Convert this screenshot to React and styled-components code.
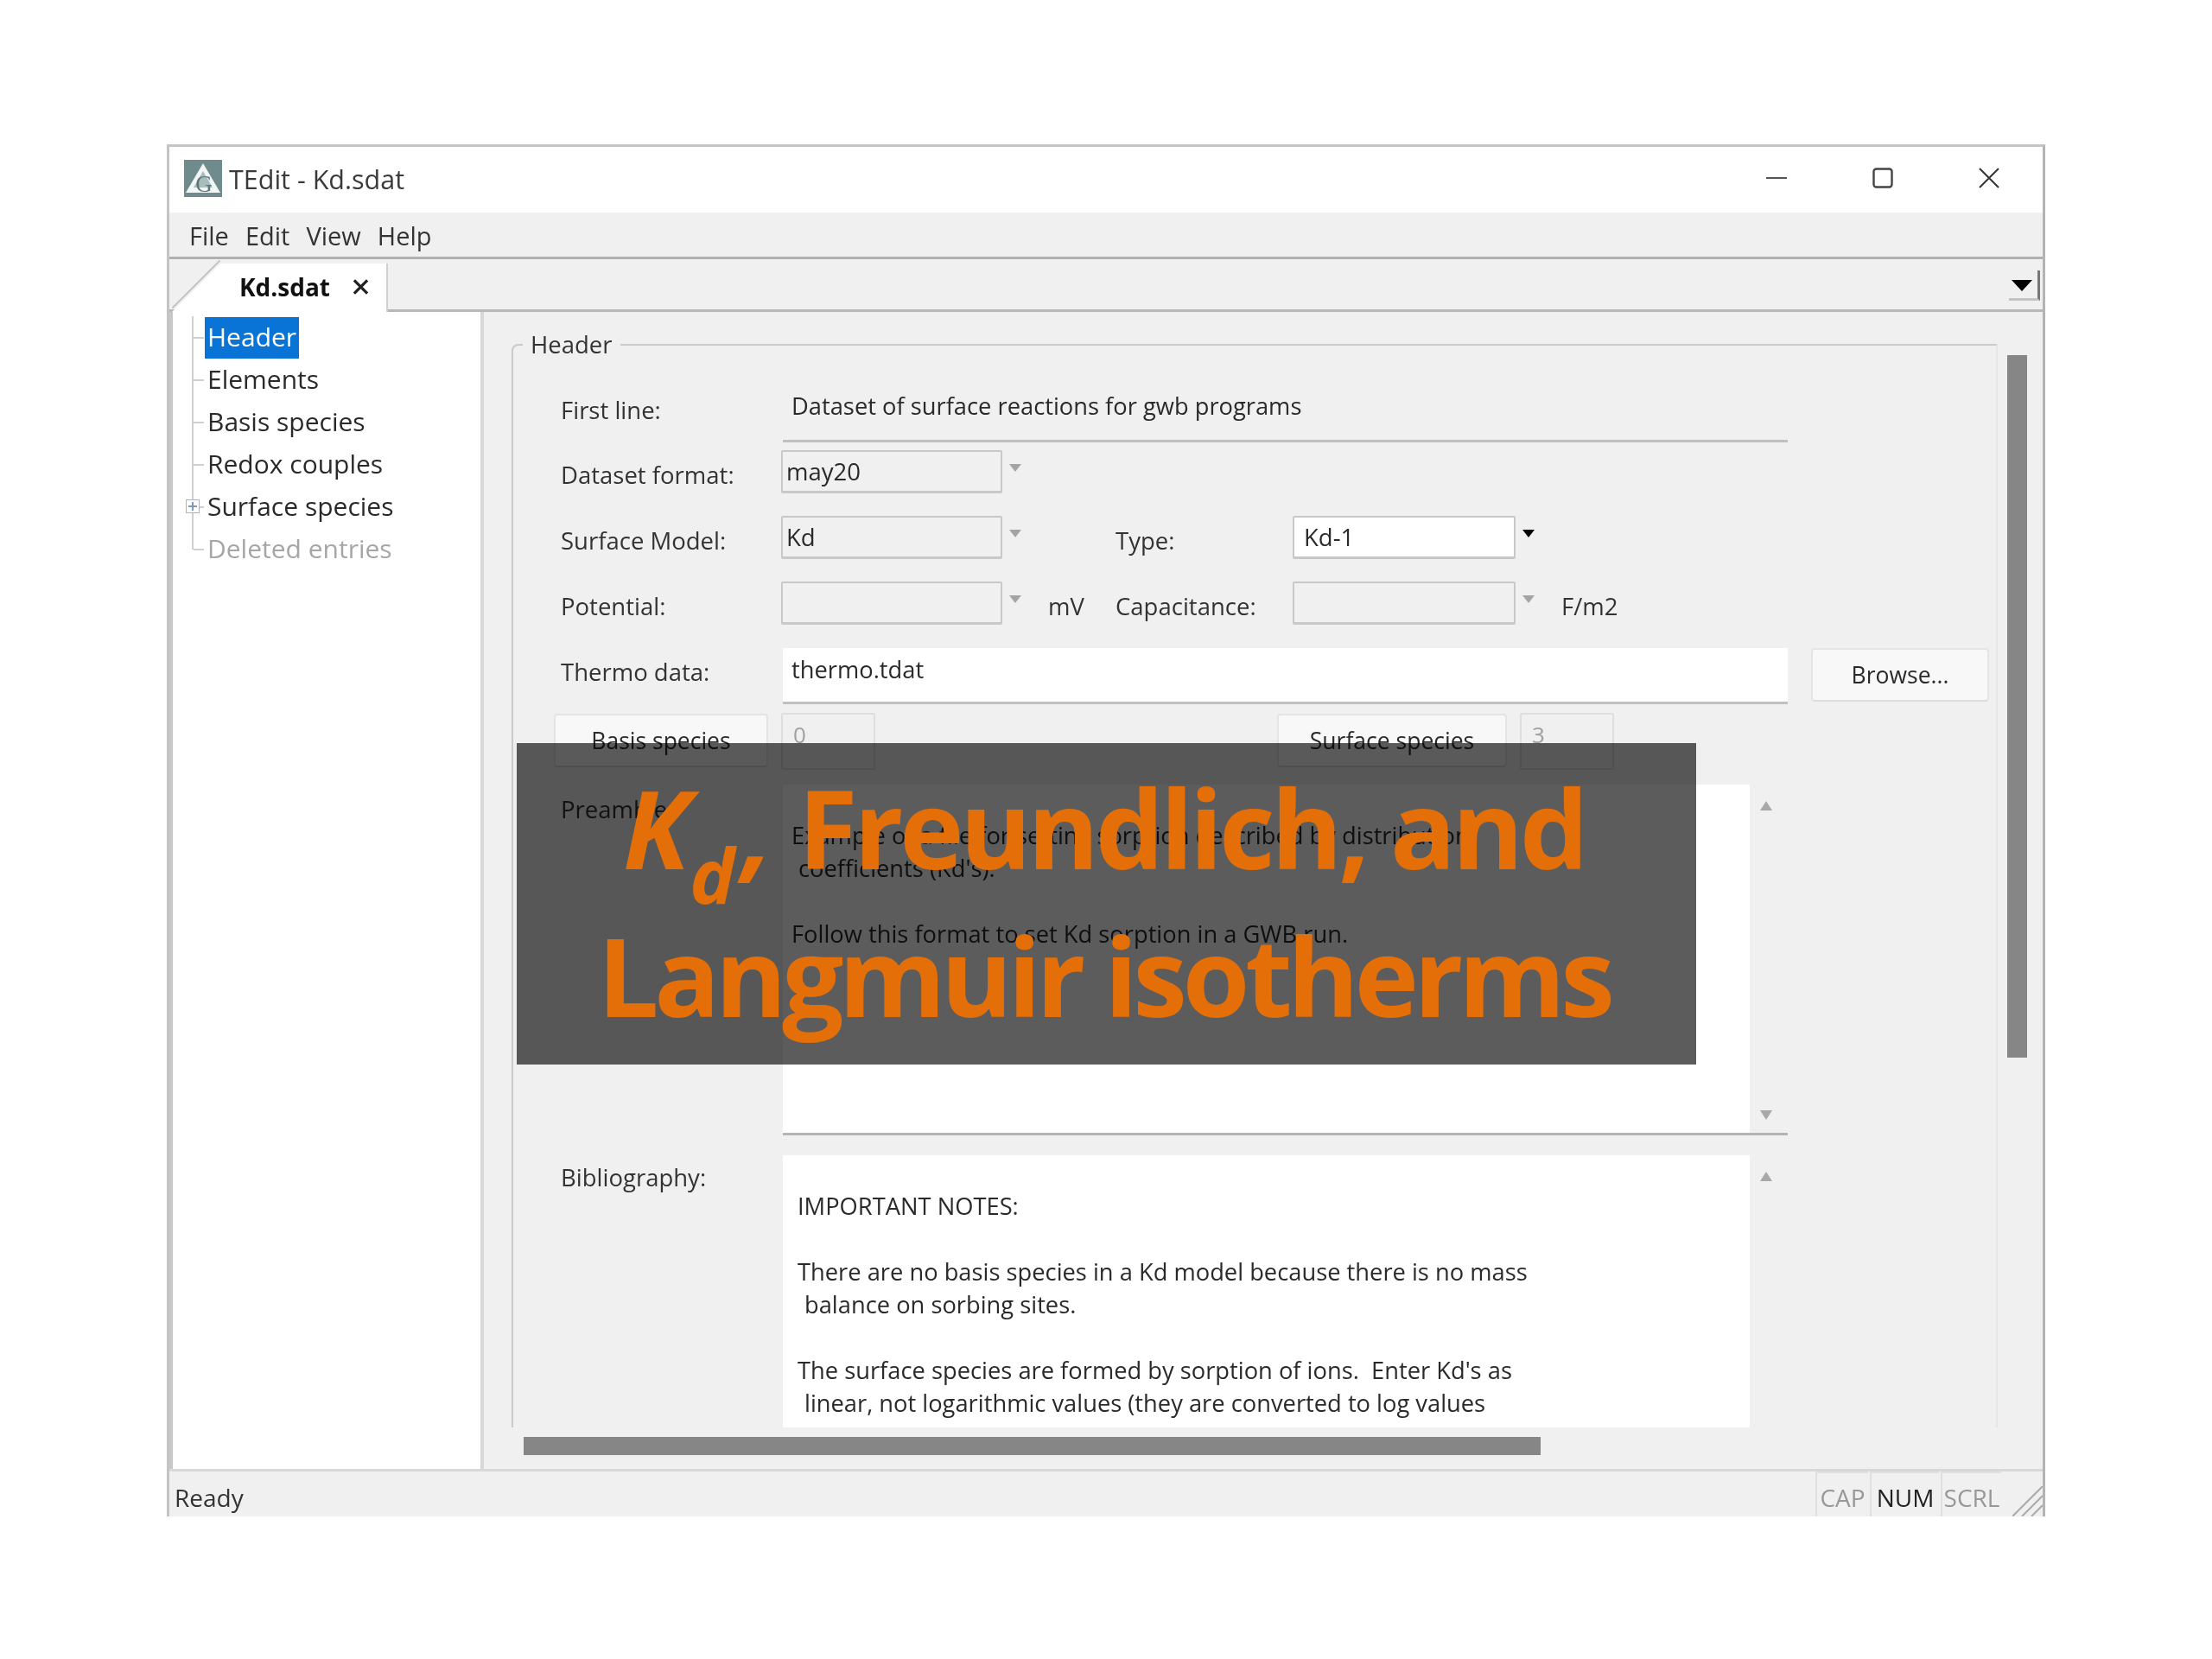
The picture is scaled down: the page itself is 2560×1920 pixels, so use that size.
import styled, { createGlobalStyle } from 'styled-components';

const GlobalStyle = createGlobalStyle`
  html, body {
    margin: 0;
    padding: 0;
    background: #fff;
  }
`;

const treeItems = ['Header', 'Elements', 'Basis species', 'Redox couples', 'Surface species', 'Deleted entries'];

function Logo() {
  return (
    <svg width='44' height='43' viewBox='0 0 44 43'>
      <rect width='44' height='43' fill='#6f8b8b' />
      <path d='M22 4 L42 38 H2 Z' fill='#f2f6f6' />
      <path d='M22 13 L33 32 H11 Z' fill='#a9bcbc' />
      <text x='23' y='37' fontSize='27' fontFamily='Liberation Serif, serif' fill='#5b7878' textAnchor='middle'>G</text>
    </svg>
  );
}

function WindowButtons() {
  return (
    <Controls>
      <svg width='24' height='24' viewBox='0 0 24 24'>
        <path d='M0 12 H24' stroke='#555' strokeWidth='2' />
      </svg>
      <svg width='24' height='24' viewBox='0 0 24 24'>
        <rect x='1.5' y='1.5' width='21' height='21' rx='3' fill='none' stroke='#444' strokeWidth='2.4' />
      </svg>
      <svg width='24' height='24' viewBox='0 0 24 24'>
        <path d='M1 1 L23 23 M23 1 L1 23' stroke='#333' strokeWidth='2' />
      </svg>
    </Controls>
  );
}

function App() {
  return (
    <>
      <GlobalStyle />
      <Window>
        <TitleBar>
          <Logo />
          <Title>TEdit - Kd.sdat</Title>
          <WindowButtons />
        </TitleBar>

        <MenuBar>
          <span>File</span>
          <span>Edit</span>
          <span>View</span>
          <span>Help</span>
        </MenuBar>

        <TabBar>
          <Tab>
            <TabLabel>Kd.sdat</TabLabel>
            <svg width='20' height='20' viewBox='0 0 20 20'>
              <path d='M2 2 L18 18 M18 2 L2 18' stroke='#222' strokeWidth='3.4' />
            </svg>
          </Tab>
          <TabMenu />
        </TabBar>

        <Body>
          <Tree>
            {treeItems.map((item, index) => (
              <TreeRow key={item} $last={index === treeItems.length - 1}>
                {item === 'Surface species' && <Expander />}
                <TreeLabel $selected={index === 0} $muted={item === 'Deleted entries'}>
                  {item}
                </TreeLabel>
              </TreeRow>
            ))}
          </Tree>
          <Splitter />

          <Pane>
            <PaneMain>
              <Viewport>
                <Group>
                  <Legend>Header</Legend>

                  <LineRow $height={64} $after={9}>
                    <RowLabel $top={8}>First line:</RowLabel>
                    <LineEdit $top={3}>Dataset of surface reactions for gwb programs</LineEdit>
                  </LineRow>

                  <ComboRow $after={26}>
                    <Label $top={10}>Dataset format:</Label>
                    <Combo>may20</Combo>
                    <Arrow />
                  </ComboRow>

                  <ComboRow $after={26}>
                    <Label $top={10}>Surface Model:</Label>
                    <Combo>Kd</Combo>
                    <Arrow />
                    <Unit />
                    <Label $top={10}>Type:</Label>
                    <Combo $active>Kd-1</Combo>
                    <Arrow $active />
                  </ComboRow>

                  <ComboRow $after={27}>
                    <Label $top={10}>Potential:</Label>
                    <Combo />
                    <Arrow />
                    <Unit>mV</Unit>
                    <Label $top={10}>Capacitance:</Label>
                    <Combo />
                    <Arrow />
                    <Unit>F/m2</Unit>
                  </ComboRow>

                  <LineRow $height={65} $after={11}>
                    <RowLabel $top={9}>Thermo data:</RowLabel>
                    <LineEdit $top={6} $white>thermo.tdat</LineEdit>
                    <PushButton $width={206} $left={27}>Browse...</PushButton>
                  </LineRow>

                  <SpeciesRow>
                    <PushButton $width={248}>Basis species</PushButton>
                    <CountBox>0</CountBox>
                    <PushButton $width={266} $left={450}>Surface species</PushButton>
                    <CountBox>3</CountBox>
                  </SpeciesRow>

                  <LineRow $height={406} $after={23}>
                    <RowLabel $top={10}>Preamble:</RowLabel>
                    <TextBox $border>
                      <TextBody>
                        <Line>Example of a file for setting sorption described by distribution</Line>
                        <Line $indent={8}>coefficients (Kd's).</Line>
                        <Line />
                        <Line>Follow this format to set Kd sorption in a GWB run.</Line>
                      </TextBody>
                      <TextScroll>
                        <UpArrow />
                        <DownArrow />
                      </TextScroll>
                    </TextBox>
                  </LineRow>

                  <LineRow $height={340} $after={0}>
                    <RowLabel $top={7}>Bibliography:</RowLabel>
                    <TextBox>
                      <TextBody>
                        <Line $indent={7}>IMPORTANT NOTES:</Line>
                        <Line />
                        <Line $indent={7}>There are no basis species in a Kd model because there is no mass</Line>
                        <Line $indent={15}>balance on sorbing sites.</Line>
                        <Line />
                        <Line $indent={7}>The surface species are formed by sorption of ions.  Enter Kd's as</Line>
                        <Line $indent={15}>linear, not logarithmic values (they are converted to log values</Line>
                      </TextBody>
                      <TextScroll>
                        <UpArrow />
                      </TextScroll>
                    </TextBox>
                  </LineRow>
                </Group>
              </Viewport>
              <VTrack>
                <VThumb />
              </VTrack>
            </PaneMain>
            <HTrack>
              <HThumb />
            </HTrack>
          </Pane>
        </Body>

        <StatusBar>
          <StatusText>Ready</StatusText>
          <Indicator $width={61}>CAP</Indicator>
          <Indicator $width={80} $on>NUM</Indicator>
          <Indicator $width={70}>SCRL</Indicator>
          <Grip viewBox='0 0 35 35'>
            <path d='M0 35 L35 0 M11 35 L35 11 M22 35 L35 22' stroke='#aaa' strokeWidth='2' />
          </Grip>
        </StatusBar>

        <Banner>
          <BannerLine $spacing={-4.5}>
            <em>K<sub>d</sub>,</em> Freundlich, and
          </BannerLine>
          <BannerLine $spacing={-5.5}>Langmuir isotherms</BannerLine>
        </Banner>
      </Window>
    </>
  );
}

export default App;

const Window = styled.div`
  position: relative;
  box-sizing: border-box;
  width: 2174px;
  height: 1588px;
  margin: 167px 0 0 193px;
  display: flex;
  flex-direction: column;
  background: #f0f0f0;
  border: 3px solid #c4c4c4;
  border-bottom: 0;
  border-right-color: #b4b4b4;
  font-family: 'Open Sans', 'Liberation Sans', sans-serif;
  font-size: 27.5px;
  color: #2a2a2a;
  filter: blur(0.6px);
`;

const TitleBar = styled.div`
  height: 76px;
  flex: none;
  box-sizing: border-box;
  display: flex;
  align-items: center;
  padding: 0 50px 4px 17px;
  background: #fff;
`;

const Title = styled.div`
  margin-left: 8px;
  padding-top: 2px;
  font-size: 30.5px;
  color: #3a3a3a;
`;

const Controls = styled.div`
  margin-left: auto;
  display: flex;
  gap: 99px;
`;

const MenuBar = styled.div`
  height: 54px;
  flex: none;
  display: flex;
  align-items: center;
  gap: 19px;
  padding: 2px 0 0 23px;
  font-size: 29px;
  color: #333;
  border-bottom: 3px solid #b0b0b0;
  box-sizing: border-box;
`;

const TabBar = styled.div`
  position: relative;
  height: 61px;
  flex: none;
  display: flex;
  align-items: flex-end;
  padding-left: 3px;
  border-bottom: 3px solid #b8b8b8;
  box-sizing: border-box;

  &::before {
    content: '';
    position: absolute;
    left: -8px;
    top: 28px;
    width: 78px;
    height: 2px;
    background: #c4c4c4;
    transform: rotate(-45deg);
  }
`;

const Tab = styled.div`
  width: 250px;
  height: 56px;
  margin-bottom: -3px;
  box-sizing: border-box;
  display: flex;
  align-items: center;
  padding: 0 20px 2px 78px;
  gap: 26px;
  background: #fff;
  border-right: 2px solid #d0d0d0;
  clip-path: polygon(56px 0, 100% 0, 100% 100%, 0 100%);
`;

const TabLabel = styled.span`
  font-weight: 700;
  font-size: 28px;
  color: #111;
`;

const TabMenu = styled.div`
  position: absolute;
  right: 3px;
  top: 13px;
  width: 33px;
  height: 32px;
  border-right: 3px solid #777;
  border-bottom: 3px solid #c4c4c4;

  &::after {
    content: '';
    position: absolute;
    left: 3px;
    top: 11px;
    border: 12px solid transparent;
    border-top: 13px solid #000;
    border-bottom: 0;
  }
`;

const Body = styled.div`
  flex: 1;
  min-height: 0;
  display: flex;
`;

const Tree = styled.div`
  width: 360px;
  flex: none;
  box-sizing: border-box;
  padding: 5px 0 0 37px;
  background: #fff;
  border-left: 4px solid #c8c8c8;
`;

const TreeRow = styled.div`
  position: relative;
  height: 49px;
  display: flex;
  align-items: center;
  font-size: 30px;

  &::before {
    content: '';
    position: absolute;
    left: -15px;
    top: 0;
    height: ${(p) => (p.$last ? '25px' : '49px')};
    width: 13px;
    border-left: 2px solid #d0d0d0;
  }

  &::after {
    content: '';
    position: absolute;
    left: -13px;
    top: 24px;
    width: 12px;
    border-top: 2px solid #d0d0d0;
  }
`;

const TreeLabel = styled.span`
  height: 48px;
  line-height: 46px;
  padding: 0 3px;
  background: ${(p) => (p.$selected ? '#0a74d6' : 'transparent')};
  color: ${(p) => (p.$selected ? '#fff' : p.$muted ? '#a6a6a6' : '#2a2a2a')};
`;

const Expander = styled.span`
  position: absolute;
  z-index: 1;
  left: -22px;
  top: 16px;
  width: 14px;
  height: 14px;
  background:
    linear-gradient(#7f99bd, #7f99bd) center / 10px 2px no-repeat,
    linear-gradient(#7f99bd, #7f99bd) center / 2px 10px no-repeat,
    #fff;
  border: 1px solid #aab4c4;
`;

const Splitter = styled.div`
  width: 4px;
  flex: none;
  background: #d8d8d8;
`;

const Pane = styled.div`
  flex: 1;
  min-width: 0;
  display: flex;
  flex-direction: column;
`;

const PaneMain = styled.div`
  height: 1291px;
  flex: none;
  display: flex;
`;

const Viewport = styled.div`
  width: 1756px;
  flex: none;
  box-sizing: border-box;
  overflow: hidden;
  padding: 19px 0 0 32px;
`;

const Group = styled.fieldset`
  margin: 0;
  min-width: 0;
  width: 1720px;
  box-sizing: border-box;
  padding: 30px 0 0 55px;
  border: 2px solid #cacaca;
  border-bottom: 0;
  border-right-color: #e6e6e6;
  border-radius: 8px 0 0 0;
`;

const Legend = styled.legend`
  margin-left: -44px;
  padding: 0 9px;
  height: 38px;
  line-height: 38px;
  color: #333;
`;

const Label = styled.div`
  padding-top: ${(p) => p.$top}px;
  line-height: 38px;
  white-space: nowrap;
  color: #333;
`;

const RowLabel = styled(Label)`
  width: 257px;
  flex: none;
`;

const Unit = styled(Label)`
  padding-top: 10px;
`;

const LineRow = styled.div`
  height: ${(p) => p.$height}px;
  margin-bottom: ${(p) => p.$after}px;
  display: flex;
`;

const LineEdit = styled.div`
  width: 1163px;
  height: 100%;
  box-sizing: border-box;
  padding: ${(p) => p.$top}px 0 0 10px;
  line-height: 38px;
  font-size: 27.3px;
  background: ${(p) => (p.$white ? '#fff' : 'transparent')};
  border-bottom: 3px solid #c0c0c0;
  color: #2a2a2a;
`;

const ComboRow = styled.div`
  height: 50px;
  margin-bottom: ${(p) => p.$after}px;
  display: grid;
  grid-template-columns: 255px 256px 53px 78px 205px 258px 53px auto;
  justify-content: start;
`;

const Combo = styled.div`
  box-sizing: border-box;
  height: 50px;
  padding-left: ${(p) => (p.$active ? '11px' : '4px')};
  line-height: 46px;
  background: ${(p) => (p.$active ? '#fff' : 'transparent')};
  border: 2px solid #c8c8c8;
  border-bottom-width: 3px;
  border-radius: 2px;
  color: #2a2a2a;
`;

const Arrow = styled.div`
  width: 0;
  height: 0;
  margin: 16px 0 0 8px;
  border: 7px solid transparent;
  border-bottom: 0;
  border-top: 9px solid ${(p) => (p.$active ? '#000' : '#a4a4a4')};
`;

const PushButton = styled.div`
  box-sizing: border-box;
  width: ${(p) => p.$width}px;
  height: 62px;
  margin-left: ${(p) => p.$left || 0}px;
  display: flex;
  align-items: center;
  justify-content: center;
  background: #f8f8f8;
  border: 2px solid #e4e4e4;
  border-bottom-color: #dcdcdc;
  border-radius: 4px;
  font-size: 26.5px;
  color: #2a2a2a;
`;

const SpeciesRow = styled.div`
  height: 62px;
  margin: 0 0 20px -8px;
  display: flex;
  gap: 15px;
`;

const CountBox = styled.div`
  box-sizing: border-box;
  width: 109px;
  height: 66px;
  margin-top: -1px;
  padding: 1px 0 0 12px;
  line-height: 44px;
  font-size: 26px;
  color: #a0a0a0;
  border: 2px solid #dedede;
  border-radius: 2px;
`;

const TextBox = styled.div`
  width: 1163px;
  height: 100%;
  display: flex;
  overflow: hidden;
  box-sizing: border-box;
  border-bottom: ${(p) => (p.$border ? '3px solid #b4b4b4' : '0')};
`;

const TextBody = styled.div`
  flex: 1;
  background: #fff;
  padding: 40px 0 0 10px;
`;

const Line = styled.div`
  height: 38px;
  line-height: 38px;
  font-size: 27.3px;
  padding-left: ${(p) => p.$indent || 0}px;
  white-space: pre;
  color: #2a2a2a;
`;

const TextScroll = styled.div`
  width: 44px;
  flex: none;
  position: relative;
`;

const UpArrow = styled.div`
  position: absolute;
  top: 19px;
  left: 12px;
  border: 7px solid transparent;
  border-top: 0;
  border-bottom: 11px solid #a8a8a8;
`;

const DownArrow = styled.div`
  position: absolute;
  bottom: 15px;
  left: 12px;
  border: 7px solid transparent;
  border-bottom: 0;
  border-top: 11px solid #a8a8a8;
`;

const VTrack = styled.div`
  flex: 1;
  padding: 50px 0 0 7px;
`;

const VThumb = styled.div`
  width: 23px;
  height: 813px;
  background: #868686;
`;

const HTrack = styled.div`
  flex: 1;
  padding: 11px 0 0 46px;
`;

const HThumb = styled.div`
  width: 1177px;
  height: 21px;
  background: #868686;
`;

const StatusBar = styled.div`
  height: 55px;
  flex: none;
  box-sizing: border-box;
  display: flex;
  align-items: stretch;
  padding-left: 6px;
  border-top: 3px solid #d8d8d8;
`;

const StatusText = styled.div`
  width: 1899px;
  line-height: 60px;
  font-size: 28px;
  color: #333;
`;

const Indicator = styled.div`
  width: ${(p) => p.$width}px;
  box-sizing: border-box;
  margin-right: 2px;
  text-align: center;
  line-height: 56px;
  font-size: 28px;
  color: ${(p) => (p.$on ? '#222' : '#989898')};
  border: 2px solid #e0e0e0;
  border-width: 2px 0 0 2px;
`;

const Grip = styled.svg`
  width: 35px;
  height: 35px;
  margin: 17px 0 0 auto;
`;

const Banner = styled.div`
  position: absolute;
  left: 402px;
  top: 690px;
  width: 1365px;
  height: 372px;
  box-sizing: border-box;
  padding: 12px 6px 0 0;
  background: rgba(0, 0, 0, 0.64);
  color: #e46f08;
  font-weight: 700;
  font-size: 126px;
  line-height: 171px;
  text-align: center;
`;

const BannerLine = styled.div`
  white-space: nowrap;
  letter-spacing: ${(p) => p.$spacing}px;

  em {
    font-style: italic;
    letter-spacing: 0;
  }

  sub {
    font-size: 88px;
    line-height: 0;
    vertical-align: -40px;
    margin-right: 9px;
  }
`;
